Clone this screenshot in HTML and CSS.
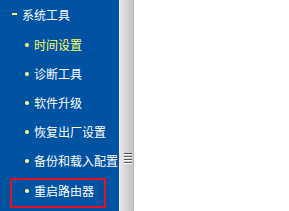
FILE: index.html
```html
<!DOCTYPE html>
<html>
<head>
  <title>系统工具</title>
  <link rel="stylesheet" href="styles.css">
</head>
<body>
  <div class="frame">
    <div class="menu">
      <div class="menu-title"><span class="dash"></span>系统工具</div>
      <ul class="menu-list">
        <li class="menu-item active"><span class="dot"></span>时间设置</li>
        <li class="menu-item"><span class="dot"></span>诊断工具</li>
        <li class="menu-item"><span class="dot"></span>软件升级</li>
        <li class="menu-item"><span class="dot"></span>恢复出厂设置</li>
        <li class="menu-item"><span class="dot"></span>备份和载入配置</li>
        <li class="menu-item marked"><span class="dot"></span>重启路由器</li>
      </ul>
    </div>
    <div class="splitter">
      <div class="grip">
        <span></span><span></span><span></span><span></span>
      </div>
    </div>
    <div class="content"></div>
  </div>
</body>
</html>
```

FILE: styles.css
```css
body {
  margin: 0;
  font-family: "Noto Sans CJK SC", "DejaVu Sans", sans-serif;
  font-size: 12px;
}

.frame {
  display: flex;
  height: 211px;
  overflow: hidden;
}

.menu {
  width: 119px;
  background-color: #0052a3;
  color: #fff;
  flex-shrink: 0;
}

.menu-title {
  display: flex;
  align-items: center;
  height: 28px;
  padding-left: 12px;
}

.dash {
  width: 5px;
  height: 2px;
  background-color: #ffff66;
  margin-right: 5px;
}

.menu-list {
  list-style: none;
  margin: 0;
  padding: 0;
}

.menu-item {
  display: flex;
  align-items: center;
  height: 29px;
  padding-left: 25px;
  white-space: nowrap;
}

.menu-item:first-child {
  margin-top: 2px;
}

.dot {
  width: 4px;
  height: 4px;
  background-color: #ffff80;
  border-radius: 50%;
  margin-right: 5px;
}

.active {
  color: #ffff66;
}

.marked {
  margin: 3px 0 0 10px;
  padding: 0 0 5px 13px;
  width: 79px;
  height: 21px;
  border: 2px solid #e8101e;
}

.splitter {
  width: 15px;
  flex-shrink: 0;
  border-left: 1px solid #f4f4f4;
  background: linear-gradient(to right, #e6e6e6, #c4c4c4);
  border-right: 1px solid #b8b8b8;
  padding-top: 153px;
  box-sizing: border-box;
}

.grip {
  width: 8px;
  margin-left: 4px;
  display: flex;
  flex-direction: column;
  gap: 1px;
}

.grip span {
  height: 1px;
  background-color: #555;
  border-bottom: 1px solid #fff;
}

.content {
  flex: 1;
  background-color: #fff;
}
```
